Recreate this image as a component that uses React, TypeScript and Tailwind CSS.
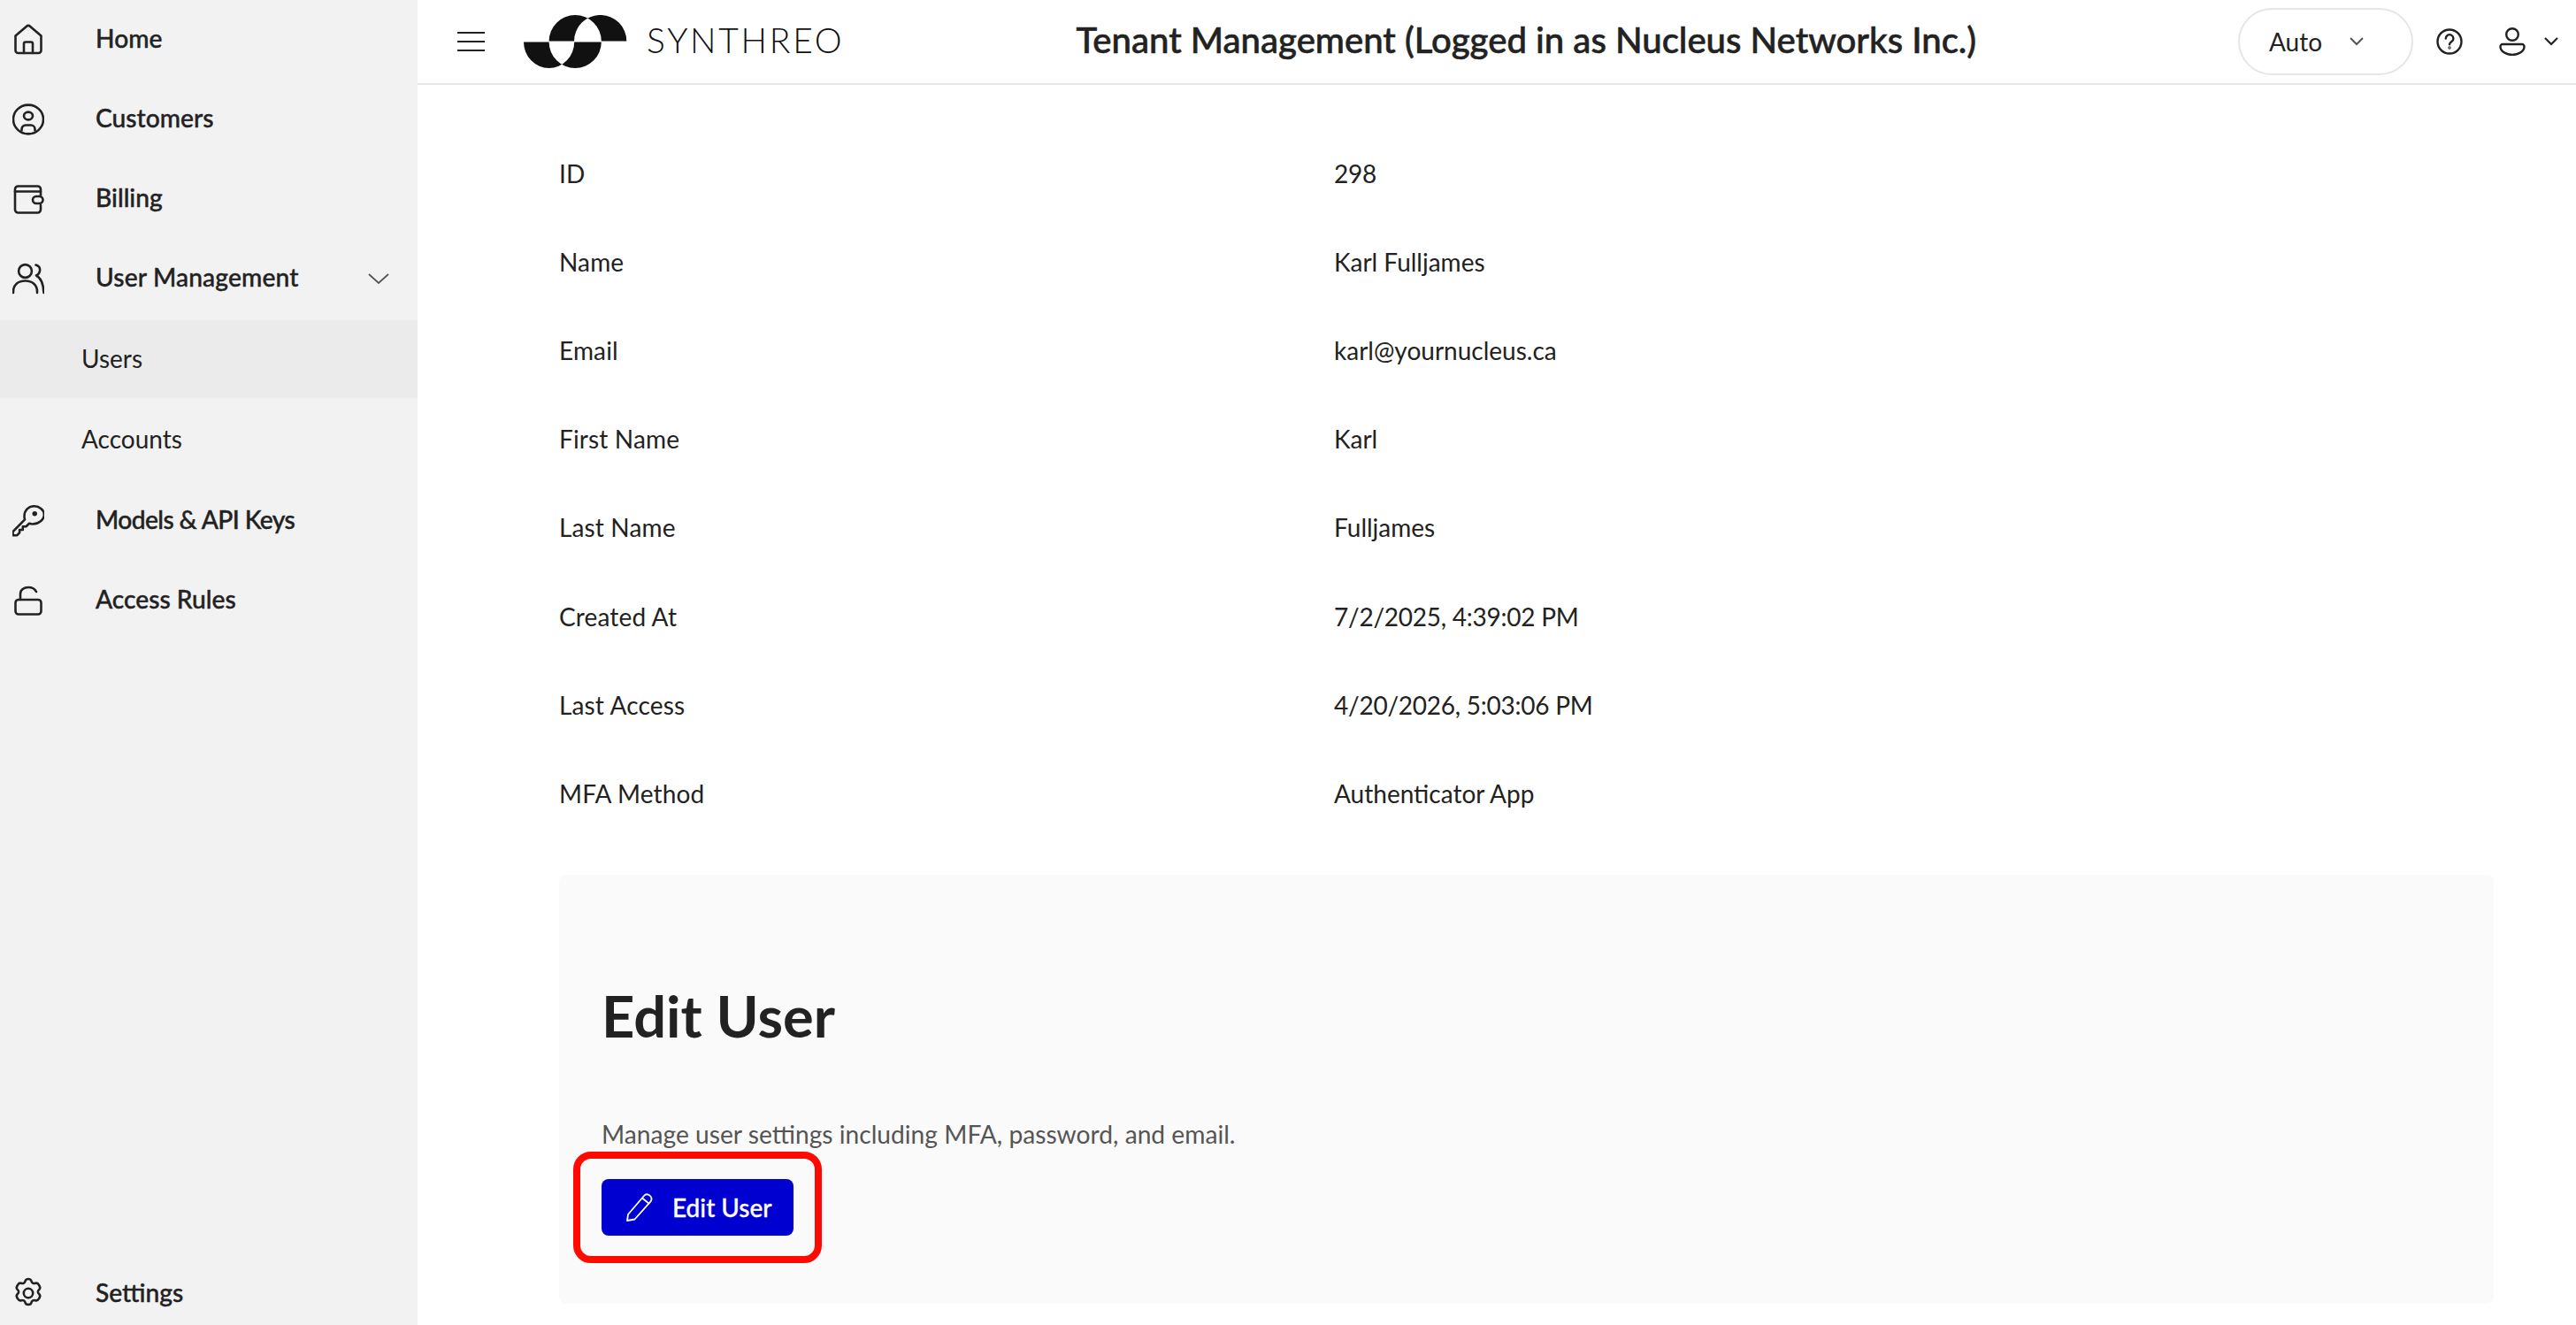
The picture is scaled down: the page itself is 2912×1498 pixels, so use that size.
import type { ReactNode } from 'react';

const font = "font-['Lato','Noto_Sans',sans-serif]";

function Icon({ children, w = 36, h = 36 }: { children: ReactNode; w?: number; h?: number }) {
  return (
    <svg
      width={w}
      height={h}
      viewBox={`0 0 ${w} ${h}`}
      fill="none"
      stroke="currentColor"
      strokeWidth="2.6"
      strokeLinecap="round"
      strokeLinejoin="round"
    >
      {children}
    </svg>
  );
}

const icons = {
  home: (
    <Icon>
      <path d="M3.5 13.5 15.800 2.900a3.400 3.400 0 0 1 4.400 0L32.500 13.500V30a3 3 0 0 1-3 3h-23a3 3 0 0 1-3-3Z" />
      <path d="M13 33V22.500a2 2 0 0 1 2-2h6a2 2 0 0 1 2 2V33" />
    </Icon>
  ),
  customers: (
    <Icon>
      <ellipse cx="18" cy="18" rx="17" ry="16.400" />
      <ellipse cx="18" cy="14" rx="5" ry="4.400" />
      <path d="M10.500 30.500v-1.500a4.500 4.500 0 0 1 4.500-4.500h6a4.500 4.500 0 0 1 4.500 4.500v1.500" />
    </Icon>
  ),
  wallet: (
    <Icon>
      <path d="M32 14V7a3.500 3.500 0 0 0-3.500-3.500H6.500A3.500 3.500 0 0 0 3 7v23a3.500 3.500 0 0 0 3.500 3.500h22A3.500 3.500 0 0 0 32 30v-5" />
      <path d="M3 9.500h29" />
      <rect x="23" y="15" width="11.500" height="8" rx="4" />
    </Icon>
  ),
  users: (
    <Icon>
      <circle cx="14.500" cy="9.500" r="7.400" />
      <path d="M1 34v-1.500C1 25 6.500 20.500 14.500 20.500S28 25 28 32.500V34" />
      <path d="M26.500 2.500c3.600 1 5 4 4.500 7-.4 2.200-2 4-4 5 4 2 8 8 8.500 19.500" />
    </Icon>
  ),
  key: (
    <Icon>
      <g transform="translate(-2.200 -2.100) scale(1.120)" strokeWidth="2.300">
        <path d="M34 11.500C34 16.500 28.500 21 22.500 21c-1.300 0-2.500-.2-3.500-.6l-3.200 3.100h-3.300v3.300H9.200v3L6.500 32.500H2.500v-3.800L14.500 16.500c-.3-1-.5-2-.5-3.200C14 7 18.500 3 23.500 3 29 3 34 6.500 34 11.500Z" />
        <circle cx="24.500" cy="10.500" r="1.300" fill="currentColor" />
      </g>
    </Icon>
  ),
  lock: (
    <Icon>
      <path d="M9 17V10.500C9 6 13 3 18 3c4 0 7.500 1.800 9 5" />
      <rect x="3.500" y="17" width="29" height="16.500" rx="3.500" />
    </Icon>
  ),
  gear: (
    <Icon>
      <circle cx="18" cy="18" r="5.200" />
      <path d="M14.500 4.500c.3-1.500 1.800-2.500 3.500-2.500s3.200 1 3.500 2.500c.4 1.900 2.500 3 4.300 2.300 1.500-.5 3.100.1 3.900 1.500l1 1.700c.8 1.400.5 3.200-.7 4.200-1.500 1.200-1.500 3.400 0 4.600 1.200 1 1.500 2.800.7 4.200l-1 1.700c-.8 1.400-2.400 2-3.900 1.500-1.800-.7-3.900.4-4.300 2.300-.3 1.500-1.800 2.500-3.500 2.500s-3.200-1-3.500-2.500c-.4-1.900-2.500-3-4.300-2.300-1.500.5-3.100-.1-3.900-1.500l-1-1.700c-.8-1.400-.5-3.200.7-4.200 1.500-1.200 1.500-3.400 0-4.600-1.200-1-1.500-2.800-.7-4.200l1-1.700c.8-1.400 2.400-2 3.900-1.500 1.800.7 3.900-.4 4.300-2.300Z" />
    </Icon>
  ),
};

function NavRow({ icon, label, chevron, tight }: { icon: ReactNode; label: string; chevron?: boolean; tight?: boolean }) {
  return (
    <div className="flex h-[90px] items-center pl-[14px] pr-[32px]">
      <span className="flex w-[94px] shrink-0">{icon}</span>
      <span className={`pb-[3px] text-[28.200px] font-medium text-[#222222] [-webkit-text-stroke:0.4px_#222222] ${tight ? 'tracking-[-0.6px]' : ''} ${chevron ? 'tracking-[0.15px]' : ''}`}>
        {label}
      </span>
      {chevron && (
        <svg className="ml-auto" width="24" height="12" viewBox="0 0 24 12" fill="none" stroke="#555555" strokeWidth="1.800">
          <path d="M1 1l11 10L23 1" />
        </svg>
      )}
    </div>
  );
}

function SubRow({ label, active }: { label: string; active?: boolean }) {
  return (
    <div className={`flex h-[88px] items-center pb-[2px] pl-[92px] text-[28px] text-[#222222] ${active ? 'bg-[#ebebeb]' : ''}`}>
      {label}
    </div>
  );
}

const details = [
  ['ID', '298'],
  ['Name', 'Karl Fulljames'],
  ['Email', 'karl@yournucleus.ca'],
  ['First Name', 'Karl'],
  ['Last Name', 'Fulljames'],
  ['Created At', '7/2/2025, 4:39:02 PM'],
  ['Last Access', '4/20/2026, 5:03:06 PM'],
  ['MFA Method', 'Authenticator App'],
];

export default function App() {
  return (
    <div className={`flex h-[1498px] w-[2912px] overflow-hidden bg-white text-[#222222] ${font}`}>
      <aside className="flex w-[472px] shrink-0 flex-col bg-[#f2f2f2]">
        <NavRow icon={icons.home} label="Home" />
        <NavRow icon={icons.customers} label="Customers" />
        <NavRow icon={icons.wallet} label="Billing" />
        <NavRow icon={icons.users} label="User Management" chevron />
        <div className="mb-[3px] mt-[2px] flex flex-col gap-[3px]">
          <SubRow label="Users" active />
          <SubRow label="Accounts" />
        </div>
        <NavRow icon={icons.key} label="Models & API Keys" tight />
        <NavRow icon={icons.lock} label="Access Rules" />
        <div className="mt-auto">
          <div className="flex h-[70px] items-center pl-[14px]">
            <span className="flex w-[94px] shrink-0 pb-[2px]">{icons.gear}</span>
            <span className="pb-[3px] text-[28.200px] font-medium [-webkit-text-stroke:0.4px_#222222]">Settings</span>
          </div>
        </div>
      </aside>

      <main className="flex min-w-0 flex-1 flex-col">
        <header className="flex h-[96px] shrink-0 items-center border-b-2 border-[#e5e5e5] pl-[45px]">
          <svg width="32" height="24" viewBox="0 0 32 24" stroke="#222222" strokeWidth="2.200">
            <path d="M0 2h31M0 12h31M0 22h31" />
          </svg>
          <svg className="ml-[43px]" width="117" height="60" viewBox="0 0 117 60" fill="#111111" fillRule="evenodd">
            <path d="M28.600 29.500A29.600 29.500 0 0 1 87.800 29.500Z M57 29.500A29.600 29.500 0 0 1 116.300 29.500Z" />
            <path d="M0 30.500A28.600 29.500 0 0 0 57.200 30.500Z M28.600 30.500A29.600 29.500 0 0 0 87.800 30.500Z" />
          </svg>
          <span className="ml-[22px] pb-[4px] text-[39px] font-light tracking-[0.07em] text-[#111111]">SYNTHREO</span>
          <h1 className="ml-[262px] whitespace-nowrap pb-[4px] text-[40.100px] font-medium text-[#222222] [-webkit-text-stroke:0.6px_#222222]">
            Tenant Management (Logged in as Nucleus Networks Inc.)
          </h1>
          <div className="ml-auto flex items-center pr-[20px]">
            <div className="flex h-[76px] w-[198px] items-center rounded-full border-2 border-[#e6e6ea] pb-[1px] pl-[33px]">
              <span className="text-[28px]">Auto</span>
              <svg className="ml-[31px]" width="16" height="10" viewBox="0 0 16 10" fill="none" stroke="#555555" strokeWidth="2">
                <path d="M1 1l7 7 7-7" />
              </svg>
            </div>
            <svg className="ml-[26px]" width="30" height="30" viewBox="0 0 30 30" fill="none" stroke="#222222" strokeWidth="2.400" strokeLinecap="round">
              <circle cx="15" cy="15" r="13.500" />
              <path d="M10.800 11.500a4.300 4.300 0 1 1 6.600 3.600c-1.500 1-2.400 1.700-2.400 3.200" />
              <circle cx="15" cy="22" r="0.500" />
            </svg>
            <svg className="ml-[41px]" width="30" height="32" viewBox="0 0 30 32" fill="none" stroke="#222222" strokeWidth="2.400">
              <circle cx="15" cy="8" r="6.800" />
              <path d="M4 19h22a2.500 2.500 0 0 1 2.500 2.500C28.500 27 22 31 15 31S1.500 27 1.500 21.500A2.500 2.500 0 0 1 4 19Z" strokeLinejoin="round" />
            </svg>
            <svg className="ml-[21px]" width="16" height="10" viewBox="0 0 16 10" fill="none" stroke="#222222" strokeWidth="2.200">
              <path d="M1 1l7 7 7-7" />
            </svg>
          </div>
        </header>

        <div className="flex flex-col pl-[160px] pr-[93px] pt-[49.500px]">
          {details.map(([label, value]) => (
            <div key={label} className="grid h-[100.200px] grid-cols-[876px_1fr] items-center text-[28px] text-[#222222]">
              <span className="tracking-[0.15px]">{label}</span>
              <span className={/\d/.test(value) ? 'tracking-[-0.25px]' : ''}>{value}</span>
            </div>
          ))}

          <section className="mt-[42.300px] h-[485px] rounded-lg bg-[#fafafa] pl-[48px] pt-[121px]">
            <h2 className="text-[65px] font-bold leading-[76px] text-[#222222]">Edit User</h2>
            <p className="mt-[78px] text-[28.200px] leading-[36px] text-[#555555]">
              Manage user settings including MFA, password, and email.
            </p>
            <div className="relative mt-[33px] w-[217px]">
              <button className="flex h-[64px] w-[217px] items-center rounded-lg bg-[#0000d0] pl-[28px] text-[28px] font-medium text-white [-webkit-text-stroke:0.3px_white]">
                <svg width="32" height="32" viewBox="0 0 32 32" fill="none" stroke="white" strokeWidth="1.800" strokeLinejoin="round">
                  <path d="M1 31l1-7L20 3c1.800-2 4.500-2 6.500-.4 2.200 1.800 2.800 4.600 1 6.700L9.500 29.500Z" />
                  <path d="M18 5.500l8 6.500" />
                </svg>
                <span className="ml-[20px]">Edit User</span>
              </button>
              <div className="absolute -inset-x-[32px] -inset-y-[31px] rounded-[20px] border-[8px] border-[#ff0a00]" />
            </div>
          </section>
        </div>
      </main>
    </div>
  );
}
